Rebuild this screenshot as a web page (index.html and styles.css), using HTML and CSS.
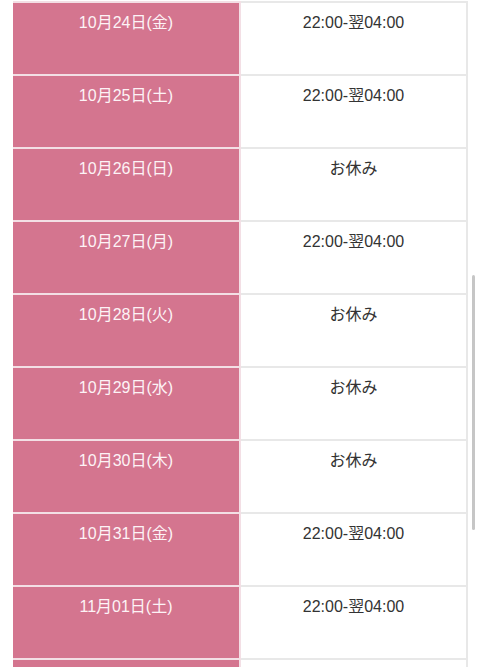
FILE: index.html
```html
<!DOCTYPE html>
<html lang="ja">
<head>
<meta charset="utf-8">
<title>営業日</title>
<link rel="stylesheet" href="styles.css">
</head>
<body>
<div class="schedule">
  <div class="day">10月24日(金)</div><div class="time">22:00-翌04:00</div>
  <div class="day">10月25日(土)</div><div class="time">22:00-翌04:00</div>
  <div class="day">10月26日(日)</div><div class="time">お休み</div>
  <div class="day">10月27日(月)</div><div class="time">22:00-翌04:00</div>
  <div class="day">10月28日(火)</div><div class="time">お休み</div>
  <div class="day">10月29日(水)</div><div class="time">お休み</div>
  <div class="day">10月30日(木)</div><div class="time">お休み</div>
  <div class="day">10月31日(金)</div><div class="time">22:00-翌04:00</div>
  <div class="day">11月01日(土)</div><div class="time">22:00-翌04:00</div>
  <div class="day"></div><div class="time"></div>
</div>
<div class="scrollbar"></div>
</body>
</html>
```
FILE: styles.css
```css
html, body {
  margin: 0;
  padding: 0;
  background: #fff;
  overflow: hidden;
  height: 667px;
}
body {
  padding-top: 1px;
  font-family: "Liberation Sans", "Noto Sans CJK JP", sans-serif;
  font-size: 16px;
}
.schedule {
  display: grid;
  grid-template-columns: 228px 227px;
  margin-left: 13px;
  width: 455px;
}
.day, .time {
  box-sizing: border-box;
  height: 73px;
  padding-top: 9px;
  line-height: 22px;
  text-align: center;
  border-bottom: 2px solid #e8e8e8;
}
.day {
  background: #d4758f;
  color: #fdf3f6;
  border-right: 2px solid #f3dfe5;
  border-bottom-color: #f3dfe5;
}
.time {
  background: #fff;
  color: #333;
  border-right: 2px solid #e8e8e8;
}
.day:nth-child(1) { border-top: 2px solid #f3dfe5; height: 75px; }
.time:nth-child(2) { border-top: 2px solid #e8e8e8; height: 75px; }
.scrollbar {
  position: fixed;
  left: 472px;
  top: 275px;
  width: 3px;
  height: 255px;
  border-radius: 2px;
  background: #c6c6c6;
}
```
